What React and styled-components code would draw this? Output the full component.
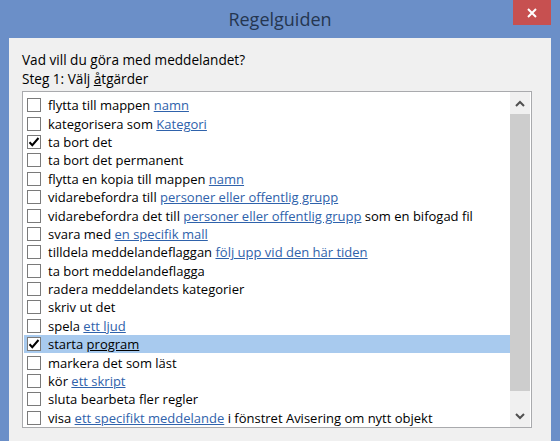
import React from 'react';
import styled, { createGlobalStyle } from 'styled-components';

const GlobalStyle = createGlobalStyle`
  html, body {
    margin: 0;
    padding: 0;
    background: #6b8fc8;
  }
  body {
    font-family: 'Open Sans', 'Noto Sans', 'Liberation Sans', sans-serif;
  }
`;

const Window = styled.div`
  width: 560px;
  height: 441px;
  background: #6b8fc8;
  display: flex;
  flex-direction: column;
  overflow: hidden;
`;

const TitleBar = styled.div`
  height: 38px;
  flex: 0 0 38px;
  display: flex;
  align-items: flex-start;
  position: relative;
`;

const Title = styled.div`
  flex: 1;
  text-align: center;
  font-size: 18px;
  line-height: 38px;
  color: #253650;
`;

const CloseButton = styled.div`
  position: absolute;
  top: 0;
  right: 9px;
  width: 38px;
  height: 25px;
  background: #c75050;
  display: flex;
  align-items: center;
  justify-content: center;
`;

const Client = styled.div`
  flex: 1;
  margin: 0 9px;
  background: #f0f0f0;
  padding: 12px 19px 0 13px;
  display: flex;
  flex-direction: column;
`;

const Label = styled.div`
  font-size: 13.6px;
  line-height: 19px;
  color: #000;
`;

const AccessKey = styled.span`
  text-decoration: underline;
`;

const ListBox = styled.div`
  margin-top: 3px;
  height: 337px;
  box-sizing: border-box;
  border: 1px solid #a9aaad;
  background: #fff;
  display: flex;
  overflow: hidden;
`;

const Rows = styled.div`
  flex: 1;
  padding: 4px 0 0 1px;
  display: flex;
  flex-direction: column;
`;

const Row = styled.div`
  flex: 0 0 18.4px;
  height: 18.4px;
  display: flex;
  align-items: center;
  padding-left: 3px;
  gap: 7px;
  background: ${(p) => (p.$selected ? '#a8caee' : 'transparent')};
  font-size: 13px;
  color: #000;
  white-space: nowrap;
`;

const Box = styled.span`
  width: 14px;
  height: 14px;
  flex: 0 0 14px;
  box-sizing: border-box;
  border: 1px solid #7a7a7a;
  background: #fff;
  display: flex;
  align-items: center;
  justify-content: center;
`;

const Link = styled.span`
  color: ${(p) => (p.$selected ? '#000' : '#2f62ab')};
  text-decoration: underline;
`;

const ScrollBar = styled.div`
  width: 20px;
  flex: 0 0 20px;
  margin-right: 1px;
  background: #f0f0f0;
  display: flex;
  flex-direction: column;
`;

const Arrow = styled.div`
  height: 22px;
  flex: 0 0 22px;
  display: flex;
  align-items: center;
  justify-content: center;
`;

const Thumb = styled.div`
  height: 277px;
  flex: 0 0 277px;
  background: #cdcdcd;
`;

const Track = styled.div`
  flex: 1;
`;

const Check = () => (
  <svg width="12" height="12" viewBox="0 0 12 12">
    <path d="M1.5 6.2 L4.3 9.2 L10.5 2" fill="none" stroke="#000" strokeWidth="2" />
  </svg>
);

const Chevron = ({ up }) => (
  <svg width="10" height="7" viewBox="0 0 10 7">
    <path
      d={up ? 'M1 6 L5 2 L9 6' : 'M1 1 L5 5 L9 1'}
      fill="none"
      stroke="#505050"
      strokeWidth="2"
    />
  </svg>
);

const actions = [
  ['flytta till mappen ', 'namn'],
  ['kategorisera som ', 'Kategori'],
  ['ta bort det', null, '', true],
  ['ta bort det permanent'],
  ['flytta en kopia till mappen ', 'namn'],
  ['vidarebefordra till ', 'personer eller offentlig grupp'],
  ['vidarebefordra det till ', 'personer eller offentlig grupp', ' som en bifogad fil'],
  ['svara med ', 'en specifik mall'],
  ['tilldela meddelandeflaggan ', 'följ upp vid den här tiden'],
  ['ta bort meddelandeflagga'],
  ['radera meddelandets kategorier'],
  ['skriv ut det'],
  ['spela ', 'ett ljud'],
  ['starta ', 'program', '', true, true],
  ['markera det som läst'],
  ['kör ', 'ett skript'],
  ['sluta bearbeta fler regler'],
  ['visa ', 'ett specifikt meddelande', ' i fönstret Avisering om nytt objekt'],
];

const App = () => (
  <Window>
    <GlobalStyle />
    <TitleBar>
      <Title>Regelguiden</Title>
      <CloseButton>
        <svg width="10" height="10" viewBox="0 0 10 10">
          <path d="M1 1 L9 9 M9 1 L1 9" stroke="#fff" strokeWidth="2" />
        </svg>
      </CloseButton>
    </TitleBar>
    <Client>
      <Label>Vad vill du göra med meddelandet?</Label>
      <Label>
        Steg 1: Välj <AccessKey>å</AccessKey>tgärder
      </Label>
      <ListBox>
        <Rows>
          {actions.map(([text, link, tail, checked, selected]) => (
            <Row key={text + (link || '')} $selected={selected}>
              <Box>{checked && <Check />}</Box>
              <span>
                {text}
                {link && <Link $selected={selected}>{link}</Link>}
                {tail}
              </span>
            </Row>
          ))}
        </Rows>
        <ScrollBar>
          <Arrow>
            <Chevron up />
          </Arrow>
          <Thumb />
          <Track />
          <Arrow>
            <Chevron />
          </Arrow>
        </ScrollBar>
      </ListBox>
    </Client>
  </Window>
);

export default App;
